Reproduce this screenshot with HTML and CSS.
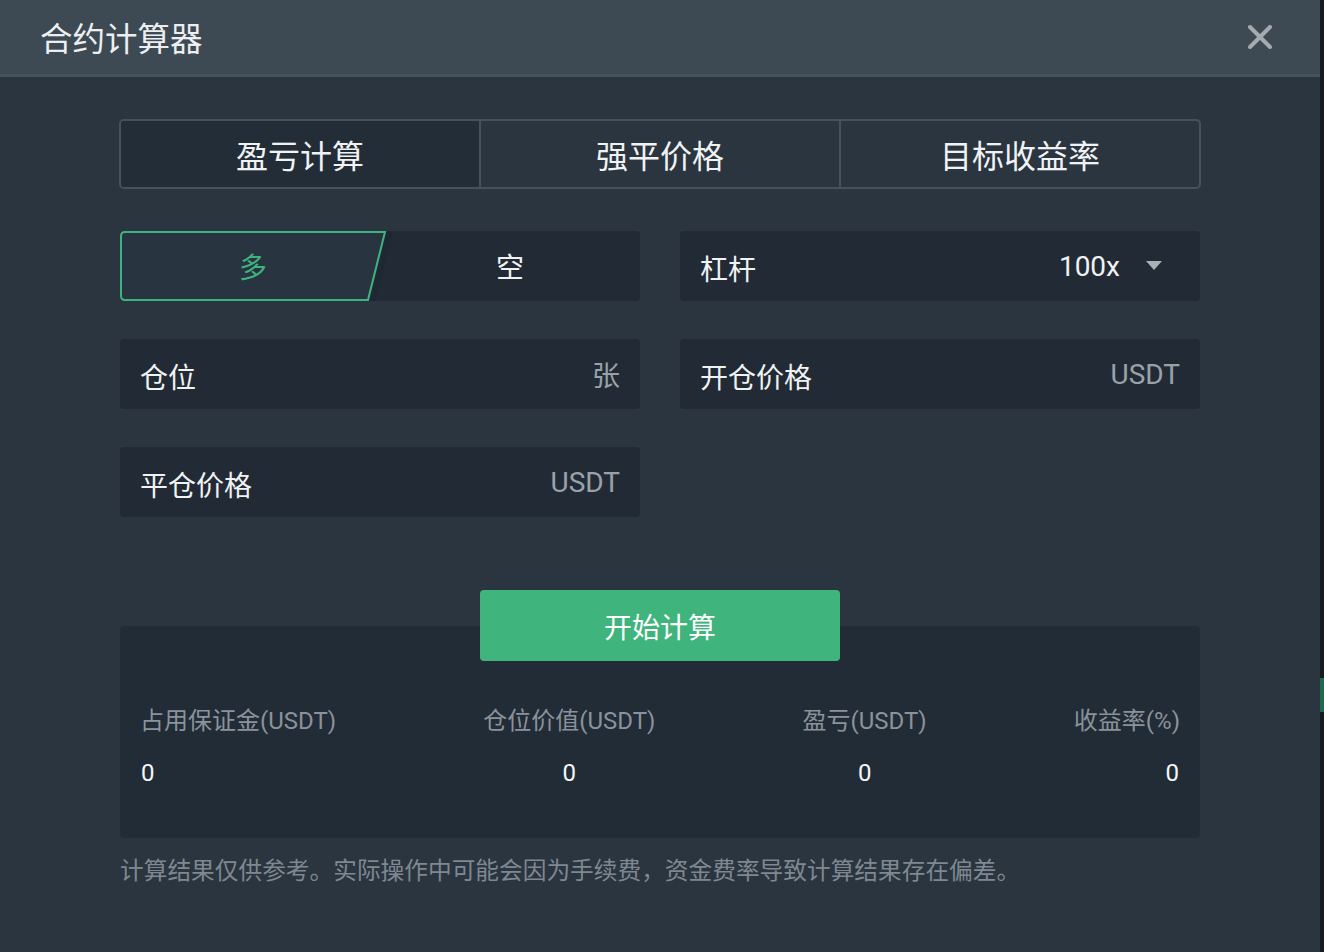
FILE: index.html
```html
<!DOCTYPE html>
<html lang="zh-CN">
<head>
<meta charset="utf-8">
<title>合约计算器</title>
<link rel="stylesheet" href="styles.css">
</head>
<body>
<div class="page">
  <div class="modal">
    <div class="modal-header">
      <div class="modal-title">合约计算器</div>
      <svg class="close" width="24" height="24" viewBox="0 0 24 24"><path d="M2 2 L22 22 M22 2 L2 22" stroke="#a4aaaf" stroke-width="4" stroke-linecap="round" fill="none"/></svg>
    </div>
    <div class="modal-body">
      <div class="tabs">
        <div class="tab active">盈亏计算</div>
        <div class="tab">强平价格</div>
        <div class="tab">目标收益率</div>
      </div>
      <div class="form">
        <div class="side">
          <svg class="side-bg" width="520" height="70" viewBox="0 0 520 70"><path d="M5 1 H265 L248 69 H5 Q1 69 1 65 V5 Q1 1 5 1 Z" fill="#283440" stroke="#3fb37f" stroke-width="2"/><path d="M267 0 L250 70 H256 L273 0 Z" fill="#1e2730" opacity="0.6"/></svg>
          <div class="side-opt long">多</div>
          <div class="side-opt short">空</div>
        </div>
        <div class="field">
          <span class="label">杠杆</span>
          <span class="select"><span class="num">100x</span><svg width="16" height="10" viewBox="0 0 16 10"><path d="M0 0 H16 L8 9 Z" fill="#a9b0b6"/></svg></span>
        </div>
        <div class="field">
          <span class="label">仓位</span>
          <span class="unit">张</span>
        </div>
        <div class="field">
          <span class="label">开仓价格</span>
          <span class="unit num">USDT</span>
        </div>
        <div class="field">
          <span class="label">平仓价格</span>
          <span class="unit num">USDT</span>
        </div>
      </div>
      <div class="results">
        <div class="calc-btn">开始计算</div>
        <div class="res-row">
          <div class="res-col first"><div class="res-label">占用保证金(USDT)</div><div class="res-val">0</div></div>
          <div class="res-col"><div class="res-label">仓位价值(USDT)</div><div class="res-val">0</div></div>
          <div class="res-col"><div class="res-label">盈亏(USDT)</div><div class="res-val">0</div></div>
          <div class="res-col last"><div class="res-label">收益率(%)</div><div class="res-val">0</div></div>
        </div>
      </div>
      <div class="note">计算结果仅供参考。实际操作中可能会因为手续费，资金费率导致计算结果存在偏差。</div>
    </div>
  </div>
  <div class="edge"></div>
</div>
</body>
</html>
```
FILE: styles.css
```css
* { box-sizing: border-box; }
html, body { margin: 0; padding: 0; }
body {
  background: #141b21;
  font-family: "Roboto", "Noto Sans CJK SC", sans-serif;
  color: #e9ecee;
  width: 1324px;
  height: 952px;
  overflow: hidden;
}
.page { display: flex; height: 952px; }
.modal {
  width: 1320px;
  height: 952px;
  background: #2a3540;
  display: flex;
  flex-direction: column;
}
.edge {
  width: 4px;
  height: 952px;
  background: linear-gradient(to bottom, #141b21 0, #141b21 678px, #1e6b4d 678px, #1e6b4d 712px, #141b21 712px);
}
.modal-header {
  height: 77px;
  background: #3d4953;
  border-bottom: 3px solid #45515b;
  display: flex;
  align-items: center;
  justify-content: space-between;
  padding: 0 48px 0 40px;
}
.modal-title {
  font-family: "Noto Sans CJK SC", sans-serif;
  font-size: 32.5px;
  line-height: 40px;
  color: #eceef0;
  font-weight: 400;
}
.close { margin-top: 0; }
.modal-body {
  padding: 42px 120px 0 120px;
  display: flex;
  flex-direction: column;
}
.tabs {
  display: flex;
  height: 70px;
  margin: 0 -1px;
  border: 2px solid #45515b;
  border-radius: 5px;
  overflow: hidden;
}
.tab {
  flex: 1;
  display: flex;
  align-items: center;
  justify-content: center;
  font-family: "Noto Sans CJK SC", sans-serif;
  font-size: 32px;
  color: #f0f2f4;
  border-left: 2px solid #45515b;
}
.tab:first-child { border-left: none; }
.tab.active { background: #232d38; }
.form {
  margin-top: 42px;
  display: grid;
  grid-template-columns: 520px 520px;
  column-gap: 40px;
  row-gap: 38px;
}
.side {
  position: relative;
  height: 70px;
  background: #222b35;
  border-radius: 4px;
  display: flex;
}
.side-bg { position: absolute; left: 0; top: 0; }
.side-opt {
  position: relative;
  display: flex;
  align-items: center;
  justify-content: center;
  font-family: "Noto Sans CJK SC", sans-serif;
  font-size: 28px;
}
.side-opt.long { width: 266px; color: #3fb37f; }
.side-opt.short { flex: 1; color: #f0f2f4; padding-right: 6px; }
.field {
  height: 70px;
  background: #222b35;
  border-radius: 4px;
  display: flex;
  align-items: center;
  justify-content: space-between;
  padding: 0 20px;
}
.label {
  font-family: "Noto Sans CJK SC", sans-serif;
  font-size: 28px;
  color: #f0f2f4;
  margin-top: 4px;
}
.unit {
  font-family: "Noto Sans CJK SC", sans-serif;
  font-size: 28px;
  color: #9aa2a9;
}
.unit.num { font-family: "Roboto", sans-serif; font-size: 28px; }
.select {
  display: flex;
  align-items: center;
  gap: 26px;
  padding-right: 18px;
}
.select .num { font-family: "Roboto", sans-serif; font-size: 28px; color: #f0f2f4; }
.results {
  margin-top: 109px;
  height: 212px;
  background: #222c37;
  border-radius: 4px;
  display: flex;
  flex-direction: column;
  align-items: center;
  padding: 0 20px;
}
.calc-btn {
  margin-top: -36px;
  width: 360px;
  height: 71px;
  background: #3fb47c;
  border-radius: 4px;
  display: flex;
  align-items: center;
  justify-content: center;
  font-family: "Noto Sans CJK SC", sans-serif;
  font-size: 28px;
  color: #ffffff;
}
.res-row {
  align-self: stretch;
  margin-top: 44px;
  display: flex;
  justify-content: space-between;
}
.res-col {
  display: flex;
  flex-direction: column;
  align-items: center;
  gap: 20px;
}
.res-col.first { align-items: flex-start; }
.res-col.last { align-items: flex-end; }
.res-label {
  font-family: "Roboto", "Noto Sans CJK SC", sans-serif;
  font-size: 24px;
  line-height: 32px;
  color: #8a939b;
}
.res-val {
  font-family: "Roboto", sans-serif;
  font-size: 24px;
  line-height: 32px;
  color: #f4f6f8;
  padding: 0 1px;
}
.note {
  margin-top: 16px;
  font-family: "Noto Sans CJK SC", sans-serif;
  font-size: 23.7px;
  line-height: 30px;
  color: #7f8890;
  white-space: nowrap;
}
```
